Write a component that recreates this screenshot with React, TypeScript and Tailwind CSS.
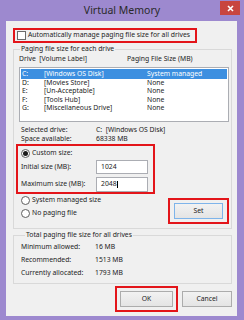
const drives = [
  { letter: "C:", label: "[Windows OS Disk]", size: "System managed" },
  { letter: "D:", label: "[Movies Store]", size: "None" },
  { letter: "E:", label: "[Un-Acceptable]", size: "None" },
  { letter: "F:", label: "[Tools Hub]", size: "None" },
  { letter: "G:", label: "[Miscellaneous Drive]", size: "None" },
];

const totals = [
  { label: "Minimum allowed:", value: "16 MB" },
  { label: "Recommended:", value: "1513 MB" },
  { label: "Currently allocated:", value: "1793 MB" },
];

const Radio = ({ checked }: { checked?: boolean }) => (
  <span className="w-[9px] h-[9px] rounded-full border border-[#5f5f5f] bg-white flex items-center justify-center shrink-0">
    {checked && <span className="w-[5px] h-[5px] rounded-full bg-[#1b1b1b]" />}
  </span>
);

const Button = ({ children, focused }: { children: React.ReactNode; focused?: boolean }) => (
  <div
    className={
      "h-[16px] flex items-center justify-center border bg-gradient-to-b from-[#f2f2f2] to-[#e4e4e4] " +
      (focused ? "border-[#7eb4ea]" : "border-[#acacac]")
    }
  >
    {children}
  </div>
);

export default function App() {
  return (
    <div className="w-[244px] h-[320px] bg-[#9d89cf] flex flex-col overflow-hidden font-['Noto_Sans',sans-serif] text-[#222]">
      {/* title bar */}
      <div className="h-[21px] shrink-0 relative flex items-center justify-center">
        <span className="text-[10.5px] text-[#2a2a2a] mt-[1px]">Virtual Memory</span>
        <div className="absolute right-[4px] top-[1px] w-[20px] h-[14px] bg-[#c8453f] flex items-center justify-center">
          <svg width="7" height="7" viewBox="0 0 7 7">
            <path d="M1 1L6 6M6 1L1 6" stroke="white" strokeWidth="1.6" />
          </svg>
        </div>
      </div>

      <div className="ml-[6px] mr-[7px] h-[295px] bg-[#f0f0f0] pt-[7px] pl-[7px] pr-[5px] text-[6.8px] leading-none">
        <div className="w-[184px] h-[15px] border-2 border-[#e3151a] flex items-center pl-[2px] gap-[2px]">
          <span className="w-[9px] h-[9px] bg-white border border-[#6b6b6b] shrink-0" />
          <span className="whitespace-nowrap">Automatically manage paging file size for all drives</span>
        </div>

        {/* paging file size for each drive */}
        <fieldset className="mt-[2px] border border-[#d9d9d9] pl-[2px] pr-[2px] pb-[4px]">
          <legend className="ml-[4px] px-[1px] h-[8px] leading-[8px]">Paging file size for each drive</legend>
          <div className="mt-[2px] ml-[3px] h-[8px] flex items-center">
            <span className="w-[108px]">Drive&nbsp;&nbsp;[Volume Label]</span>
            <span>Paging File Size (MB)</span>
          </div>
          <div className="mt-[4px] ml-[3px] h-[55px] bg-white border border-[#abadb3] p-[1px]">
            {drives.map((d, i) => (
              <div
                key={d.letter}
                className={
                  "flex items-center pl-[1px] " +
                  (i === 0 ? "h-[10px] bg-[#3c8fe0] text-white" : "h-[8.5px]")
                }
              >
                <span className="w-[22px]">{d.letter}</span>
                <span className="w-[103px]">{d.label}</span>
                <span>{d.size}</span>
              </div>
            ))}
          </div>
          <div className="mt-[3.5px] ml-[5px] h-[9px] flex items-center">
            <span className="w-[75px]">Selected drive:</span>
            <span>C:&nbsp;&nbsp;[Windows OS Disk]</span>
          </div>
          <div className="ml-[5px] h-[9px] flex items-center">
            <span className="w-[75px]">Space available:</span>
            <span>68338 MB</span>
          </div>

          {/* custom size */}
          <div className="mt-[0.5px] w-[139px] h-[50px] border-2 border-[#e3151a] pl-[3px] pr-[5px] pt-[3px]">
            <div className="h-[9px] flex items-center gap-[2px]">
              <Radio checked />
              <span>Custom size:</span>
            </div>
            <div className="mt-[2px] h-[14px] flex items-center justify-between">
              <span>Initial size (MB):</span>
              <span className="w-[52px] h-[14px] bg-white border border-[#abadb3] flex items-center pl-[4px]">1024</span>
            </div>
            <div className="mt-[3px] h-[15px] flex items-center justify-between">
              <span>Maximum size (MB):</span>
              <span className="w-[52px] h-[15px] bg-white border border-[#abadb3] flex items-center pl-[4px]">
                2048<span className="w-px h-[7px] bg-black" />
              </span>
            </div>
          </div>

          <div className="flex justify-between">
            <div className="ml-[5px] pt-[1.5px] flex flex-col gap-[4px]">
              <div className="h-[9px] flex items-center gap-[2px]">
                <Radio />
                <span>System managed size</span>
              </div>
              <div className="h-[9px] flex items-center gap-[2px]">
                <Radio />
                <span>No paging file</span>
              </div>
            </div>
            <div className="mt-[4px] w-[61px] h-[26px] border-2 border-[#e3151a] px-[4px] py-[3px]">
              <Button focused>Set</Button>
            </div>
          </div>
        </fieldset>

        {/* total paging file size */}
        <fieldset className="mt-[2px] border border-[#d9d9d9] pl-[7px] pb-[3.5px]">
          <legend className="ml-[4px] px-[1px] h-[8px] leading-[8px]">Total paging file size for all drives</legend>
          <div className="mt-[1.5px]">
            {totals.map((t) => (
              <div key={t.label} className="h-[13px] flex items-center">
                <span className="w-[74px]">{t.label}</span>
                <span>{t.value}</span>
              </div>
            ))}
          </div>
        </fieldset>

        <div className="mt-[2px] flex justify-end items-center gap-[4px]">
          <div className="w-[63px] h-[26px] border-2 border-[#e3151a] px-[3px] py-[3px]">
            <Button>OK</Button>
          </div>
          <div className="w-[50px]">
            <Button>Cancel</Button>
          </div>
        </div>
      </div>
    </div>
  );
}
